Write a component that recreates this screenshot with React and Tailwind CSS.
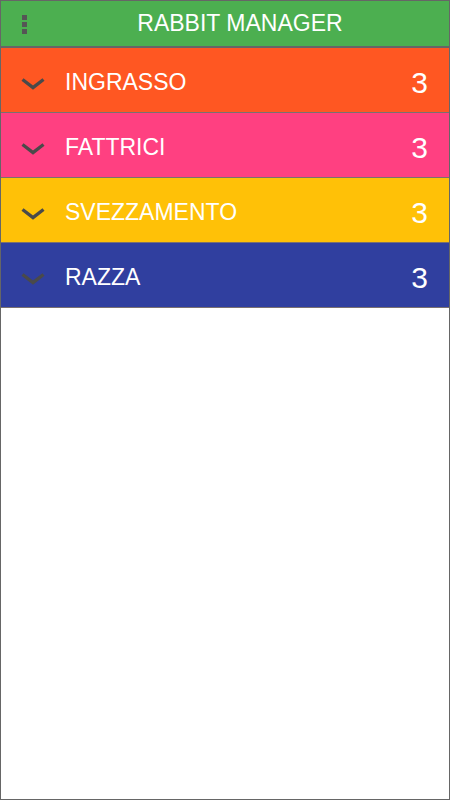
import React from "react";

const rows = [
  { label: "INGRASSO", count: 3, bg: "bg-[#ff5722]" },
  { label: "FATTRICI", count: 3, bg: "bg-[#ff4081]" },
  { label: "SVEZZAMENTO", count: 3, bg: "bg-[#ffc107]" },
  { label: "RAZZA", count: 3, bg: "bg-[#303f9f]" },
];

function Chevron() {
  return (
    <svg width="26" height="14" viewBox="0 0 26 14" fill="none">
      <path d="M2.5 2.5 L13 10.5 L23.5 2.5" stroke="#4a4a4a" strokeWidth="3.4" strokeLinecap="butt" strokeLinejoin="miter" />
    </svg>
  );
}

export default function App() {
  return (
    <div className="w-[450px] h-[800px] border border-[#666] bg-white flex flex-col" style={{ fontFamily: "'Liberation Sans', Arial, sans-serif" }}>
      <div className="h-[47px] shrink-0 bg-[#4caf50] flex items-center border-b-2 border-[#666]">
        <div className="w-[47px] flex flex-col items-center gap-[2px] pt-[2px]">
          <span className="w-[5px] h-[5px] bg-[#555]" />
          <span className="w-[5px] h-[5px] bg-[#555]" />
          <span className="w-[5px] h-[5px] bg-[#555]" />
        </div>
        <div className="flex-1 text-center text-white text-[23px] mr-[15px] -ml-[2px]">RABBIT MANAGER</div>
      </div>
      {rows.map((r) => (
        <div key={r.label} className={`${r.bg} h-[65px] shrink-0 border-b border-[#7a7070] flex items-center text-white`}>
          <div className="w-[64px] flex justify-center pt-[7px]">
            <Chevron />
          </div>
          <div className="flex-1 text-[23px] pt-[4px]">{r.label}</div>
          <div className="text-[30px] pr-[21px] pt-[5px]">{r.count}</div>
        </div>
      ))}
    </div>
  );
}
